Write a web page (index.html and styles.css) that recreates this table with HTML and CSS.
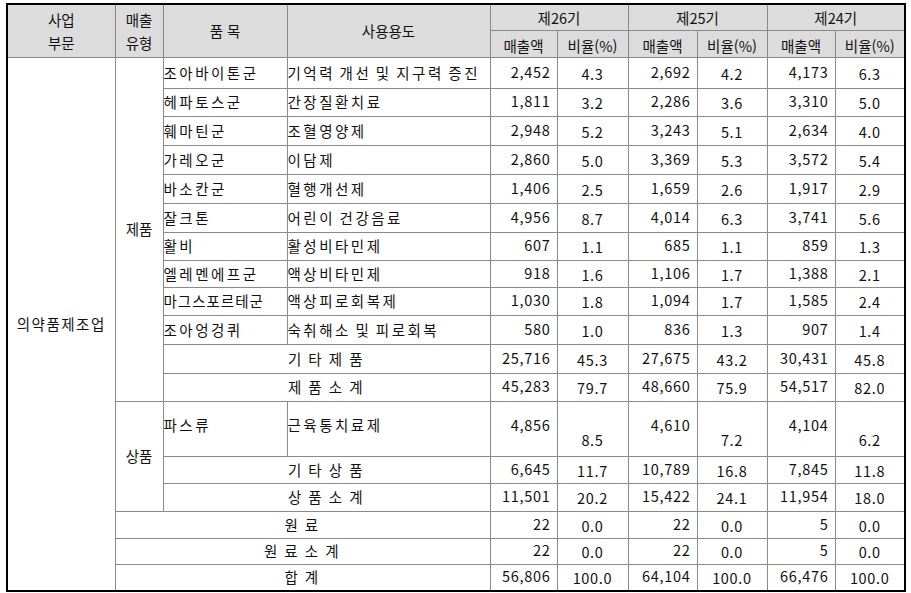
FILE: index.html
```html
<!DOCTYPE html>
<html lang="ko">
<head>
<meta charset="utf-8">
<title>매출 현황</title>
<link rel="stylesheet" href="styles.css">
</head>
<body>
<div class="wrap">
<table class="sales">
  <colgroup>
    <col class="c-dept"><col class="c-type"><col class="c-item"><col class="c-use">
    <col class="c-amt"><col class="c-rat"><col class="c-amt2"><col class="c-rat2"><col class="c-amt3"><col class="c-rat3">
  </colgroup>
  <thead>
    <tr class="h1">
      <th rowspan="2">사업<br>부문</th>
      <th rowspan="2">매출<br>유형</th>
      <th rowspan="2">품 목</th>
      <th rowspan="2">사용용도</th>
      <th colspan="2">제26기</th>
      <th colspan="2">제25기</th>
      <th colspan="2">제24기</th>
    </tr>
    <tr class="h2">
      <th>매출액</th><th>비율(%)</th>
      <th>매출액</th><th>비율(%)</th>
      <th>매출액</th><th>비율(%)</th>
    </tr>
  </thead>
  <tbody>
    <tr class="r31">
      <td rowspan="18" class="ctr dept">의약품제조업</td>
      <td rowspan="12" class="ctr type-lbl">제품</td>
      <td class="item">조아바이톤군</td><td class="use">기억력 개선 및 지구력 증진</td>
      <td class="amt">2,452</td><td class="rat">4.3</td><td class="amt">2,692</td><td class="rat">4.2</td><td class="amt">4,173</td><td class="rat">6.3</td>
    </tr>
    <tr class="r28">
      <td class="item">헤파토스군</td><td class="use">간장질환치료</td>
      <td class="amt">1,811</td><td class="rat">3.2</td><td class="amt">2,286</td><td class="rat">3.6</td><td class="amt">3,310</td><td class="rat">5.0</td>
    </tr>
    <tr class="r29">
      <td class="item">훼마틴군</td><td class="use">조혈영양제</td>
      <td class="amt">2,948</td><td class="rat">5.2</td><td class="amt">3,243</td><td class="rat">5.1</td><td class="amt">2,634</td><td class="rat">4.0</td>
    </tr>
    <tr class="r29">
      <td class="item">가레오군</td><td class="use">이담제</td>
      <td class="amt">2,860</td><td class="rat">5.0</td><td class="amt">3,369</td><td class="rat">5.3</td><td class="amt">3,572</td><td class="rat">5.4</td>
    </tr>
    <tr class="r29">
      <td class="item">바소칸군</td><td class="use">혈행개선제</td>
      <td class="amt">1,406</td><td class="rat">2.5</td><td class="amt">1,659</td><td class="rat">2.6</td><td class="amt">1,917</td><td class="rat">2.9</td>
    </tr>
    <tr class="r29">
      <td class="item">잘크톤</td><td class="use">어린이 건강음료</td>
      <td class="amt">4,956</td><td class="rat">8.7</td><td class="amt">4,014</td><td class="rat">6.3</td><td class="amt">3,741</td><td class="rat">5.6</td>
    </tr>
    <tr class="r28">
      <td class="item">활비</td><td class="use">활성비타민제</td>
      <td class="amt">607</td><td class="rat">1.1</td><td class="amt">685</td><td class="rat">1.1</td><td class="amt">859</td><td class="rat">1.3</td>
    </tr>
    <tr class="r27">
      <td class="item">엘레멘에프군</td><td class="use">액상비타민제</td>
      <td class="amt">918</td><td class="rat">1.6</td><td class="amt">1,106</td><td class="rat">1.7</td><td class="amt">1,388</td><td class="rat">2.1</td>
    </tr>
    <tr class="r28">
      <td class="item tight">마그스포르테군</td><td class="use">액상피로회복제</td>
      <td class="amt">1,030</td><td class="rat">1.8</td><td class="amt">1,094</td><td class="rat">1.7</td><td class="amt">1,585</td><td class="rat">2.4</td>
    </tr>
    <tr class="r29">
      <td class="item">조아엉겅퀴</td><td class="use">숙취해소 및 피로회복</td>
      <td class="amt">580</td><td class="rat">1.0</td><td class="amt">836</td><td class="rat">1.3</td><td class="amt">907</td><td class="rat">1.4</td>
    </tr>
    <tr class="r29">
      <td colspan="2" class="ctr lbl">기 타 제 품</td>
      <td class="amt">25,716</td><td class="rat">45.3</td><td class="amt">27,675</td><td class="rat">43.2</td><td class="amt">30,431</td><td class="rat">45.8</td>
    </tr>
    <tr class="r28">
      <td colspan="2" class="ctr lbl">제 품 소 계</td>
      <td class="amt">45,283</td><td class="rat">79.7</td><td class="amt">48,660</td><td class="rat">75.9</td><td class="amt">54,517</td><td class="rat">82.0</td>
    </tr>
    <tr class="r55 tall">
      <td rowspan="3" class="ctr type-lbl">상품</td>
      <td class="item">파스류</td><td class="use">근육통치료제</td>
      <td class="amt">4,856</td><td class="rat">8.5</td><td class="amt">4,610</td><td class="rat">7.2</td><td class="amt">4,104</td><td class="rat">6.2</td>
    </tr>
    <tr class="r27">
      <td colspan="2" class="ctr lbl">기 타 상 품</td>
      <td class="amt">6,645</td><td class="rat">11.7</td><td class="amt">10,789</td><td class="rat">16.8</td><td class="amt">7,845</td><td class="rat">11.8</td>
    </tr>
    <tr class="r28">
      <td colspan="2" class="ctr lbl">상 품 소 계</td>
      <td class="amt">11,501</td><td class="rat">20.2</td><td class="amt">15,422</td><td class="rat">24.1</td><td class="amt">11,954</td><td class="rat">18.0</td>
    </tr>
    <tr class="r27">
      <td colspan="3" class="ctr lbl">원 료</td>
      <td class="amt">22</td><td class="rat">0.0</td><td class="amt">22</td><td class="rat">0.0</td><td class="amt">5</td><td class="rat">0.0</td>
    </tr>
    <tr class="r26">
      <td colspan="3" class="ctr lbl">원 료 소 계</td>
      <td class="amt">22</td><td class="rat">0.0</td><td class="amt">22</td><td class="rat">0.0</td><td class="amt">5</td><td class="rat">0.0</td>
    </tr>
    <tr class="r27">
      <td colspan="3" class="ctr lbl">합 계</td>
      <td class="amt">56,806</td><td class="rat">100.0</td><td class="amt">64,104</td><td class="rat">100.0</td><td class="amt">66,476</td><td class="rat">100.0</td>
    </tr>
  </tbody>
</table>
</div>
</body>
</html>
```

FILE: styles.css
```css
html, body {
  margin: 0;
  padding: 0;
  background: #ffffff;
}

.wrap {
  padding: 3px 0 0 6px;
}

.sales {
  border-collapse: collapse;
  table-layout: fixed;
  width: 900px;
  border: 2px solid #000000;
  font-family: "Noto Sans CJK KR", "Noto Sans", sans-serif;
  font-size: 14.5px;
  color: #111111;
}

.c-dept { width: 108px; }
.c-type { width: 48px; }
.c-item { width: 124px; }
.c-use { width: 203px; }
.c-amt { width: 67px; }
.c-rat { width: 71px; }
.c-amt2 { width: 69px; }
.c-rat2 { width: 70px; }
.c-amt3 { width: 68px; }
.c-rat3 { width: 70px; }

.sales th,
.sales td {
  border: 1px solid #8a8a8a;
  padding: 0;
  line-height: 20px;
  vertical-align: middle;
  white-space: nowrap;
  overflow: hidden;
}

.sales th {
  background: #dcdcdc;
  font-weight: normal;
  text-align: center;
  line-height: 23px;
}

.h1 { height: 26px; }
.h2 { height: 27px; }
.h2 th { padding-top: 3px; }

.r26 { height: 26px; }
.r27 { height: 27px; }
.r28 { height: 28px; }
.r29 { height: 29px; }
.r31 { height: 31px; }
.r55 { height: 55px; }

.ctr { text-align: center; }
.type-lbl { padding-top: 8px; }

.dept {
  letter-spacing: 1.5px;
  padding-top: 4px;
}

.item,
.use,
.lbl {
  letter-spacing: 2.5px;
  word-spacing: -2px;
}

.item { padding-left: 3px; }
.use { padding-left: 2px; }

.sales .tight { letter-spacing: 1px; }

.amt {
  text-align: right;
  letter-spacing: 0.7px;
  padding-right: 6px !important;
  padding-bottom: 2px !important;
}

.rat {
  text-align: center;
  letter-spacing: 0.7px;
  padding-top: 2px !important;
}

.tall .item,
.tall .use,
.tall .amt {
  vertical-align: top;
  padding-top: 13px !important;
}

.tall .rat {
  vertical-align: bottom;
  padding-bottom: 6px !important;
}
```
